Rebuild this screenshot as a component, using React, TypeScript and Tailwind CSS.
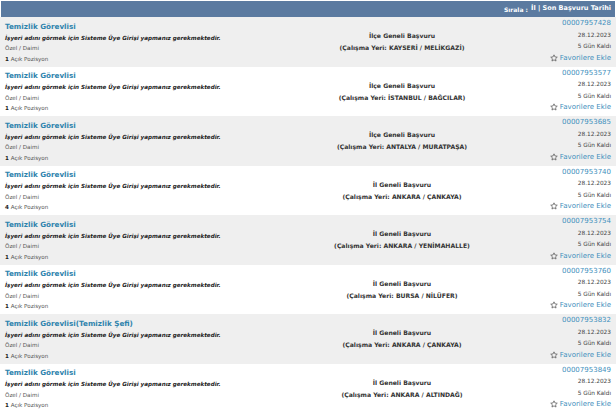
import React from "react";

type Job = {
  title: string;
  scope: string;
  place: string;
  id: string;
  count: string;
};

const jobs: Job[] = [
  { title: "Temizlik Görevlisi", scope: "İlçe Geneli Başvuru", place: "KAYSERİ / MELİKGAZİ", id: "00007957428", count: "1" },
  { title: "Temizlik Görevlisi", scope: "İlçe Geneli Başvuru", place: "İSTANBUL / BAĞCILAR", id: "00007953577", count: "1" },
  { title: "Temizlik Görevlisi", scope: "İlçe Geneli Başvuru", place: "ANTALYA / MURATPAŞA", id: "00007953685", count: "1" },
  { title: "Temizlik Görevlisi", scope: "İl Geneli Başvuru", place: "ANKARA / ÇANKAYA", id: "00007953740", count: "4" },
  { title: "Temizlik Görevlisi", scope: "İl Geneli Başvuru", place: "ANKARA / YENİMAHALLE", id: "00007953754", count: "1" },
  { title: "Temizlik Görevlisi", scope: "İl Geneli Başvuru", place: "BURSA / NİLÜFER", id: "00007953760", count: "1" },
  { title: "Temizlik Görevlisi(Temizlik Şefi)", scope: "İl Geneli Başvuru", place: "ANKARA / ÇANKAYA", id: "00007953832", count: "1" },
  { title: "Temizlik Görevlisi", scope: "İl Geneli Başvuru", place: "ANKARA / ALTINDAĞ", id: "00007953849", count: "1" },
];

function Star() {
  return (
    <svg width="8" height="8" viewBox="0 0 24 24" className="inline-block mr-[2px] -mt-[1px]" fill="none" stroke="#555" strokeWidth="2.2" strokeLinejoin="round">
      <path d="M12 2.5l2.9 6.3 6.9.8-5.1 4.7 1.4 6.8L12 17.6l-6.1 3.5 1.4-6.8-5.1-4.7 6.9-.8z" />
    </svg>
  );
}

export default function App() {
  return (
    <div className="w-[616px] h-[415px] bg-white overflow-hidden" style={{ fontFamily: '"DejaVu Sans", Verdana, sans-serif' }}>
      <div className="pt-[1px] px-[1px]">
        <div className="h-[16px] bg-[#5b7aa0] flex items-center justify-end pr-[4px] text-white font-bold">
          <span className="text-[6px]">Sırala :</span>
          <span className="text-[6.5px] ml-[3px]">İl | Son Başvuru Tarihi</span>
        </div>
      </div>
      <div>
        {jobs.map((j, i) => (
          <div key={j.id} className={`h-[49.5px] flex ${i % 2 === 0 ? "bg-[#efefef]" : "bg-white"}`}>
            <div className="w-[258px] pl-[5px] pt-[2.5px] leading-[10.6px]">
              <div className="text-[7.2px] font-bold text-[#2e83ad] whitespace-nowrap leading-[13px]">{j.title}</div>
              <div className="text-[5.6px] font-bold italic text-[#222] whitespace-nowrap">İşyeri adını görmek için Sisteme Üye Girişi yapmanız gerekmektedir.</div>
              <div className="text-[5.6px] text-[#555]">Özel / Daimi</div>
              <div className="text-[5.6px] text-[#555]"><span className="font-bold text-[#222]">{j.count}</span> Açık Pozisyon</div>
            </div>
            <div className="flex-1 flex flex-col items-center justify-center leading-[12px] text-[6.1px] font-bold text-[#333] pt-[1px]">
              <div>{j.scope}</div>
              <div>(Çalışma Yeri: {j.place})</div>
            </div>
            <div className="w-[70px] pr-[5px] pt-[1px] flex flex-col items-end leading-[11.5px]">
              <div className="text-[7px] text-[#3f8fbd]">{j.id}</div>
              <div className="text-[5.8px] text-[#444]">28.12.2023</div>
              <div className="text-[5.8px] text-[#444]">5 Gün Kaldı</div>
              <div className="text-[7px] text-[#3f8fbd] flex items-center whitespace-nowrap"><Star />Favorilere Ekle</div>
            </div>
          </div>
        ))}
      </div>
    </div>
  );
}
